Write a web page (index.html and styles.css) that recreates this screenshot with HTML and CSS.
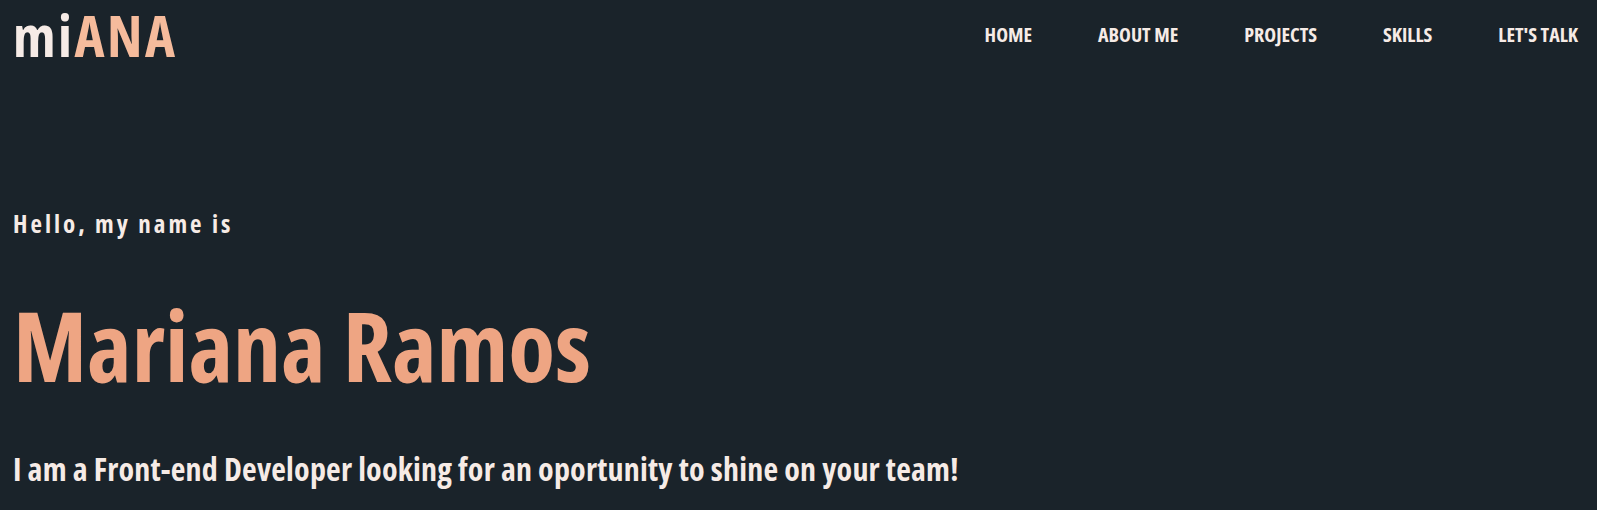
FILE: index.html
```html
<!DOCTYPE html>
<html lang="en">
<head>
<meta charset="utf-8">
<title>miANA</title>
<link rel="stylesheet" href="styles.css">
</head>
<body>
<header class="site-header">
  <a class="logo" href="#">mi<span class="logo-accent">ANA</span></a>
  <nav class="nav">
    <a class="nav-link" href="#">HOME</a>
    <a class="nav-link" href="#">ABOUT ME</a>
    <a class="nav-link" href="#">PROJECTS</a>
    <a class="nav-link" href="#">SKILLS</a>
    <a class="nav-link" href="#">LET'S TALK</a>
  </nav>
</header>
<main class="hero">
  <p class="hero-greeting">Hello, my name is</p>
  <h1 class="hero-name">Mariana Ramos</h1>
  <p class="hero-tagline">I am a Front-end Developer looking for an oportunity to shine on your team!</p>
</main>
</body>
</html>
```

FILE: styles.css
```css
html, body {
  margin: 0;
  padding: 0;
}

body {
  background: #1a232a;
  color: #f6ebe6;
  font-family: "Open Sans", "Liberation Sans", sans-serif;
  min-height: 510px;
}

a {
  color: inherit;
  text-decoration: none;
}

.site-header {
  display: flex;
  justify-content: space-between;
  align-items: center;
  padding: 1px 19px 0 13px;
}

.logo {
  font-size: 57px;
  font-weight: 700;
  font-stretch: 75%;
  letter-spacing: 2.5px;
  line-height: 1.2;
  color: #f6ebe6;
}

.logo-accent {
  color: #f5bb9c;
}

.nav {
  display: flex;
  gap: 66px;
}

.nav-link {
  font-size: 20px;
  font-weight: 700;
  font-stretch: 75%;
  line-height: 1.2;
}

.hero {
  padding: 0 13px;
}

.hero-greeting {
  margin: 139px 0 0;
  font-size: 25px;
  font-weight: 700;
  font-stretch: 75%;
  letter-spacing: 3px;
  line-height: 1.2;
}

.hero-name {
  margin: 49px 0 0;
  font-size: 96px;
  font-weight: 700;
  font-stretch: 75%;
  line-height: 1.2;
  color: #eea583;
}

.hero-tagline {
  margin: 47px 0 0;
  font-size: 32px;
  font-weight: 700;
  font-stretch: 75%;
  letter-spacing: 0.2px;
  line-height: 1.2;
}
```
